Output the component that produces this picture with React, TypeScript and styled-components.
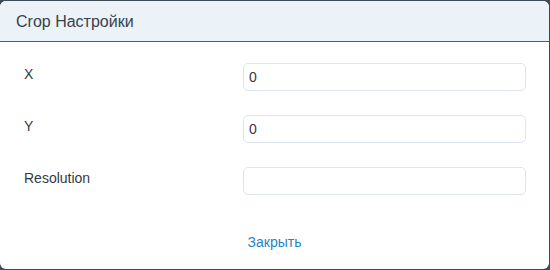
import { Fragment } from "react";
import styled, { createGlobalStyle } from "styled-components";

const GlobalStyle = createGlobalStyle`
  html, body {
    margin: 0;
    padding: 0;
    background: #3b4c57;
  }
  body {
    font-family: "Liberation Sans", Arial, sans-serif;
  }
`;

const Page = styled.div`
  box-sizing: border-box;
  height: 270px;
  padding: 1px 1px 1px 0;
`;

const Dialog = styled.div`
  background: #fff;
  border-radius: 6px;
  height: 100%;
  display: flex;
  flex-direction: column;
  overflow: hidden;
`;

const Header = styled.div`
  box-sizing: border-box;
  height: 41px;
  padding: 1px 16px 0;
  display: flex;
  align-items: center;
  background: #ecf3f8;
  border-bottom: 1px solid #4a5a66;
  color: #37414c;
  font-size: 16px;
`;

const Body = styled.div`
  display: grid;
  grid-template-columns: 219px 283px;
  row-gap: 24px;
  padding: 21px 24px 0 24px;
`;

const Label = styled.label`
  color: #333a44;
  font-size: 14px;
  line-height: 18px;
  padding-top: 2px;
`;

const Input = styled.input`
  box-sizing: border-box;
  height: 28px;
  width: 100%;
  margin: 0;
  padding: 0 5px;
  border: 1px solid #dde3ef;
  border-radius: 5px;
  font-family: "Liberation Sans", Arial, sans-serif;
  font-size: 14px;
  color: #333a44;
  outline: none;
`;

const Footer = styled.div`
  display: flex;
  justify-content: center;
  padding-top: 39px;
`;

const Link = styled.a`
  color: #1f84c6;
  font-size: 14px;
  text-decoration: none;
  cursor: pointer;
`;

const fields = [
  { label: "X", value: "0" },
  { label: "Y", value: "0" },
  { label: "Resolution", value: "" },
];

export default function App() {
  return (
    <>
      <GlobalStyle />
      <Page>
        <Dialog>
          <Header>Crop Настройки</Header>
          <Body>
            {fields.map((f) => (
              <Fragment key={f.label}>
                <Label>{f.label}</Label>
                <Input defaultValue={f.value} />
              </Fragment>
            ))}
          </Body>
          <Footer>
            <Link>Закрыть</Link>
          </Footer>
        </Dialog>
      </Page>
    </>
  );
}
